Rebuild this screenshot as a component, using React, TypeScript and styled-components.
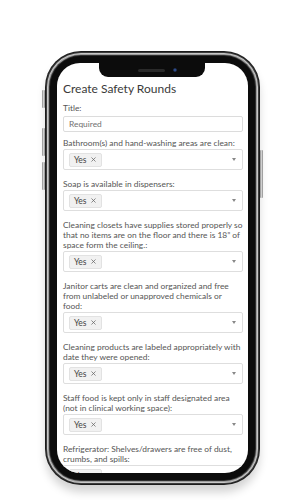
import React from "react";
import styled, { createGlobalStyle } from "styled-components";
import { X } from "lucide-react";

interface Question {
  label: string;
  value: string;
}

const questions: Question[] = [
  { label: "Bathroom(s) and hand-washing areas are clean:", value: "Yes" },
  { label: "Soap is available in dispensers:", value: "Yes" },
  {
    label:
      "Cleaning closets have supplies stored properly so that no items are on the floor and there is 18\u201D of space form the ceiling.:",
    value: "Yes",
  },
  {
    label:
      "Janitor carts are clean and organized and free from unlabeled or unapproved chemicals or\nfood:",
    value: "Yes",
  },
  {
    label:
      "Cleaning products are labeled appropriately with date they were opened:",
    value: "Yes",
  },
  {
    label:
      "Staff food is kept only in staff designated area (not in clinical working space):",
    value: "Yes",
  },
  {
    label: "Refrigerator: Shelves/drawers are free of dust, crumbs, and spills:",
    value: "Yes",
  },
];

const App: React.FC = () => {
  return (
    <>
      <GlobalStyle />
      <Stage>
        <Phone>
          <SideButton $side="left" $top={34} $height={18} />
          <SideButton $side="left" $top={72} $height={28} />
          <SideButton $side="left" $top={106} $height={28} />
          <SideButton $side="right" $top={94} $height={48} />
          <Screen>
            <Notch>
              <Speaker />
              <Camera />
            </Notch>
            <Content>
              <Title>Create Safety Rounds</Title>
              <Label>Title:</Label>
              <TextInput placeholder="Required" readOnly />
              {questions.map((q) => (
                <Field key={q.label}>
                  <Label>{q.label}</Label>
                  <Select>
                    <Chip>
                      {q.value}
                      <X size={7} strokeWidth={2.6} color="#666" />
                    </Chip>
                    <Caret />
                  </Select>
                </Field>
              ))}
            </Content>
          </Screen>
        </Phone>
      </Stage>
    </>
  );
};

export default App;

// Styles
const GlobalStyle = createGlobalStyle`
  html, body {
    margin: 0;
    padding: 0;
    background: #ffffff;
  }
  body {
    font-family: "Lato", "Open Sans", sans-serif;
  }
`;

const Stage = styled.div`
  width: 299px;
  height: 500px;
  padding: 56px 0 0 50px;
  box-sizing: border-box;
  overflow: hidden;
`;

const Phone = styled.div`
  position: relative;
  width: 205px;
  height: 424px;
  padding: 7px;
  box-sizing: border-box;
  background: #0c0c0c;
  border-radius: 31px;
  box-shadow: 0 0 0 1px #2e2e2e, 0 0 0 2px #9c9c9c, 0 0 0 3px #c8c8c8,
    0 0 0 4px #3c3c3c, 0 0 0 5px #1c1c1c, 0 8px 10px 4px rgba(0, 0, 0, 0.18);
`;

const SideButton = styled.div<{ $side: "left" | "right"; $top: number; $height: number }>`
  position: absolute;
  top: ${({ $top }) => $top}px;
  ${({ $side }) => ($side === "left" ? "left: -8px;" : "right: -8px;")}
  width: 3px;
  height: ${({ $height }) => $height}px;
  background: linear-gradient(90deg, #8a8a8a, #d0d0d0, #8a8a8a);
  border-radius: 1px;
`;

const Screen = styled.div`
  position: relative;
  width: 100%;
  height: 100%;
  background: #ffffff;
  border-radius: 23px;
  overflow: hidden;
`;

const Notch = styled.div`
  position: absolute;
  top: 0;
  left: 42px;
  width: 106px;
  height: 14px;
  background: #0c0c0c;
  border-radius: 0 0 9px 9px;
  display: flex;
  align-items: center;
  justify-content: center;
  gap: 8px;
  padding-left: 10px;
  box-sizing: border-box;
`;

const Speaker = styled.div`
  width: 27px;
  height: 3px;
  border-radius: 2px;
  background: #2a2a2a;
`;

const Camera = styled.div`
  width: 4px;
  height: 4px;
  border-radius: 50%;
  background: radial-gradient(circle, #2c4a8a 30%, #141a28 80%);
`;

const Content = styled.div`
  padding: 18px 5px 0 6px;
  display: flex;
  flex-direction: column;
`;

const Title = styled.h1`
  margin: 0 0 6px;
  font-family: "Lato", sans-serif;
  font-weight: 400;
  font-size: 12px;
  line-height: 16px;
  color: #3a3a3a;
`;

const Label = styled.div`
  font-size: 8.4px;
  line-height: 10px;
  color: #555555;
  margin-bottom: 1px;
  white-space: pre-line;
`;

const TextInput = styled.input`
  height: 16px;
  box-sizing: border-box;
  border: 1px solid #dcdcdc;
  border-radius: 2px;
  padding: 0 5px;
  margin: 2px 0 6px;
  font-family: "Lato", sans-serif;
  font-size: 8.4px;
  color: #333;
  outline: none;

  &::placeholder {
    color: #707070;
  }
`;

const Field = styled.div`
  display: flex;
  flex-direction: column;
  margin-bottom: 9px;
`;

const Select = styled.div`
  height: 21px;
  box-sizing: border-box;
  border: 1px solid #dedede;
  border-radius: 2px;
  display: flex;
  align-items: center;
  justify-content: space-between;
  padding: 0 6px 0 5px;
`;

const Chip = styled.span`
  display: inline-flex;
  align-items: center;
  gap: 3px;
  height: 14px;
  padding: 0 4px 0 4px;
  box-sizing: border-box;
  background: #f1f1f1;
  border: 1px solid #e2e2e2;
  border-radius: 2px;
  font-size: 8.5px;
  color: #444;
`;

const Caret = styled.span`
  width: 0;
  height: 0;
  border-left: 2.5px solid transparent;
  border-right: 2.5px solid transparent;
  border-top: 3px solid #888;
`;
